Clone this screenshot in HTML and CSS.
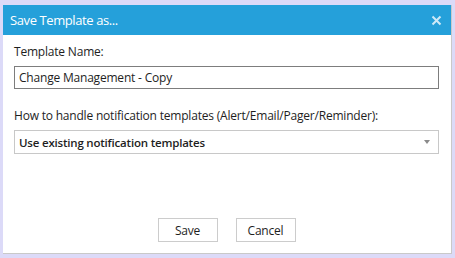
FILE: index.html
```html
<!DOCTYPE html>
<html lang="en">

<head>
    <meta charset="UTF-8">
    <title>Save Template as...</title>
    <link rel="stylesheet" href="styles.css">
</head>

<body>
    <div class="dialog">
        <div class="titlebar">
            <span class="title">Save Template as...</span>
            <span class="close">
                <svg width="11" height="11" viewBox="0 0 11 11">
                    <path d="M1.5 1.5 L9.5 9.5 M9.5 1.5 L1.5 9.5" stroke="#cfe9f7" stroke-width="2" />
                </svg>
            </span>
        </div>
        <div class="content">
            <div class="label">Template Name:</div>
            <input class="textbox" type="text" value="Change Management - Copy">
            <div class="label second">How to handle notification templates (Alert/Email/Pager/Reminder):</div>
            <div class="select">
                <span>Use existing notification templates</span>
                <span class="arrow"></span>
            </div>
            <div class="buttons">
                <button class="button">Save</button>
                <button class="button">Cancel</button>
            </div>
        </div>
    </div>
</body>

</html>
```

FILE: styles.css
```css
body {
    margin: 0;
    background: #dcdaf8;
    font-family: "Open Sans", "Noto Sans", sans-serif;
    font-size: 12px;
    letter-spacing: -0.2px;
    color: #1e1e1e;
}

.dialog {
    margin: 5px 0 0 3px;
    width: 448px;
    height: 248px;
    background: #ffffff;
    border-right: 1px solid #c9c9c9;
    border-bottom: 1px solid #c9c9c9;
    display: flex;
    flex-direction: column;
}

.titlebar {
    height: 30px;
    background: #25a0da;
    display: flex;
    align-items: center;
    justify-content: space-between;
    padding: 0 8px 0 7px;
}

.title {
    color: #ffffff;
    font-size: 13px;
    letter-spacing: -0.4px;
}

.close {
    display: flex;
    margin-right: 1px;
}

.content {
    flex: 1;
    padding: 8px 12px 0 11px;
    display: flex;
    flex-direction: column;
}

.label {
    height: 18px;
    line-height: 18px;
}

.label.second {
    margin-top: 18px;
}

.textbox {
    margin-top: 5px;
    height: 23px;
    box-sizing: border-box;
    border: 1px solid #7d7d7d;
    padding: 0 4px;
    font: inherit;
    letter-spacing: inherit;
    color: inherit;
    outline: none;
}

.select {
    margin-top: 5px;
    height: 24px;
    box-sizing: border-box;
    border: 1px solid #c8c8c8;
    padding: 0 8px 0 4px;
    display: flex;
    align-items: center;
    justify-content: space-between;
    font-size: 11.5px;
    font-weight: 600;
    letter-spacing: -0.2px;
}

.arrow {
    width: 0;
    height: 0;
    border-left: 3px solid transparent;
    border-right: 3px solid transparent;
    border-top: 4px solid #8a8a8a;
}

.buttons {
    margin-top: auto;
    margin-bottom: 11px;
    display: flex;
    justify-content: center;
    gap: 18px;
}

.button {
    width: 60px;
    height: 24px;
    border: 1px solid #cccccc;
    background: #ffffff;
    font: inherit;
    letter-spacing: inherit;
    color: inherit;
    padding: 0;
}
```
